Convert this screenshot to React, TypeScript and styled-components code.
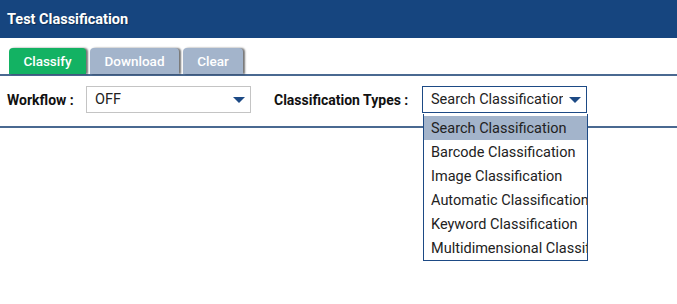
import { useState } from 'react';
import styled, { createGlobalStyle } from 'styled-components';

const GlobalStyle = createGlobalStyle`
  body {
    margin: 0;
    background: #fff;
    font-family: Roboto, 'Liberation Sans', sans-serif;
  }
`;

const Page = styled.div`
  width: 677px;
  height: 304px;
  background: #fff;
  overflow: hidden;
`;

const Header = styled.header`
  height: 38px;
  display: flex;
  align-items: center;
  padding-left: 7px;
  background-color: #16457f;
`;

const Title = styled.h1`
  margin: 0;
  font-size: 14.5px;
  font-weight: 700;
  color: #fff;
  text-shadow: 1px 1px 1px rgba(0, 0, 0, 0.35);
`;

const TabBar = styled.nav`
  display: flex;
  gap: 4px;
  padding: 10px 0 0 9px;
  border-bottom: 2px solid #4a6991;
`;

const Tab = styled.button<{ $active?: boolean; $width: number }>`
  width: ${(p) => p.$width}px;
  height: 26px;
  padding: 0;
  border: none;
  border-radius: 4px 4px 0 0;
  background-color: ${(p) => (p.$active ? '#13b263' : '#a3b4cb')};
  box-shadow: 2px 0 2px rgba(0, 0, 0, 0.55);
  color: #fff;
  font-family: Roboto, 'Liberation Sans', sans-serif;
  font-size: 13.5px;
  font-weight: 500;
  cursor: pointer;
`;

const FormRow = styled.div`
  display: flex;
  align-items: center;
  padding: 10px 0 13px 7px;
  border-bottom: 2px solid #4a6991;
`;

const Field = styled.div<{ $labelWidth: number }>`
  position: relative;
  display: flex;
  align-items: center;
  margin-right: 23px;
  label {
    width: ${(p) => p.$labelWidth}px;
    font-size: 14px;
    font-weight: 700;
    color: #111;
  }
`;

const SelectBox = styled.div<{ $focused?: boolean }>`
  box-sizing: border-box;
  width: 165px;
  height: 27px;
  display: flex;
  align-items: center;
  padding: 0 5px 0 8px;
  border: 1px solid ${(p) => (p.$focused ? '#1d4a85' : '#c4c4c4')};
  background: #fff;
  font-size: 14.5px;
  color: #222;
  cursor: pointer;
  span {
    flex: 1;
    white-space: nowrap;
    overflow: hidden;
  }
`;

const Arrow = styled.i`
  flex: none;
  width: 0;
  height: 0;
  margin-left: 6px;
  border-left: 6px solid transparent;
  border-right: 6px solid transparent;
  border-top: 6px solid #1d4a85;
`;

const Options = styled.ul`
  position: absolute;
  top: 28px;
  right: -1px;
  box-sizing: border-box;
  width: 165px;
  margin: 0;
  padding: 2px 0 0;
  list-style: none;
  border: 1px solid #1d4a85;
  border-top: none;
  background: #fff;
  overflow: hidden;
  z-index: 2;
`;

const Option = styled.li<{ $selected?: boolean }>`
  height: 24px;
  line-height: 25px;
  padding-left: 7px;
  font-size: 14.5px;
  color: #222;
  white-space: nowrap;
  background-color: ${(p) => (p.$selected ? '#a3b4cb' : 'transparent')};
`;

const types = [
  'Search Classification',
  'Barcode Classification',
  'Image Classification',
  'Automatic Classification',
  'Keyword Classification',
  'Multidimensional Classification',
];

export default function App() {
  const [type] = useState(types[0]);

  return (
    <Page>
      <GlobalStyle />
      <Header>
        <Title>Test Classification</Title>
      </Header>
      <TabBar>
        <Tab $active $width={77}>Classify</Tab>
        <Tab $width={89}>Download</Tab>
        <Tab $width={60}>Clear</Tab>
      </TabBar>
      <FormRow>
        <Field $labelWidth={79}>
          <label>Workflow :</label>
          <SelectBox>
            <span>OFF</span>
            <Arrow />
          </SelectBox>
        </Field>
        <Field $labelWidth={148}>
          <label>Classification Types :</label>
          <SelectBox $focused>
            <span>{type}</span>
            <Arrow />
          </SelectBox>
          <Options>
            {types.map((t) => (
              <Option key={t} $selected={t === type}>
                {t}
              </Option>
            ))}
          </Options>
        </Field>
      </FormRow>
    </Page>
  );
}
